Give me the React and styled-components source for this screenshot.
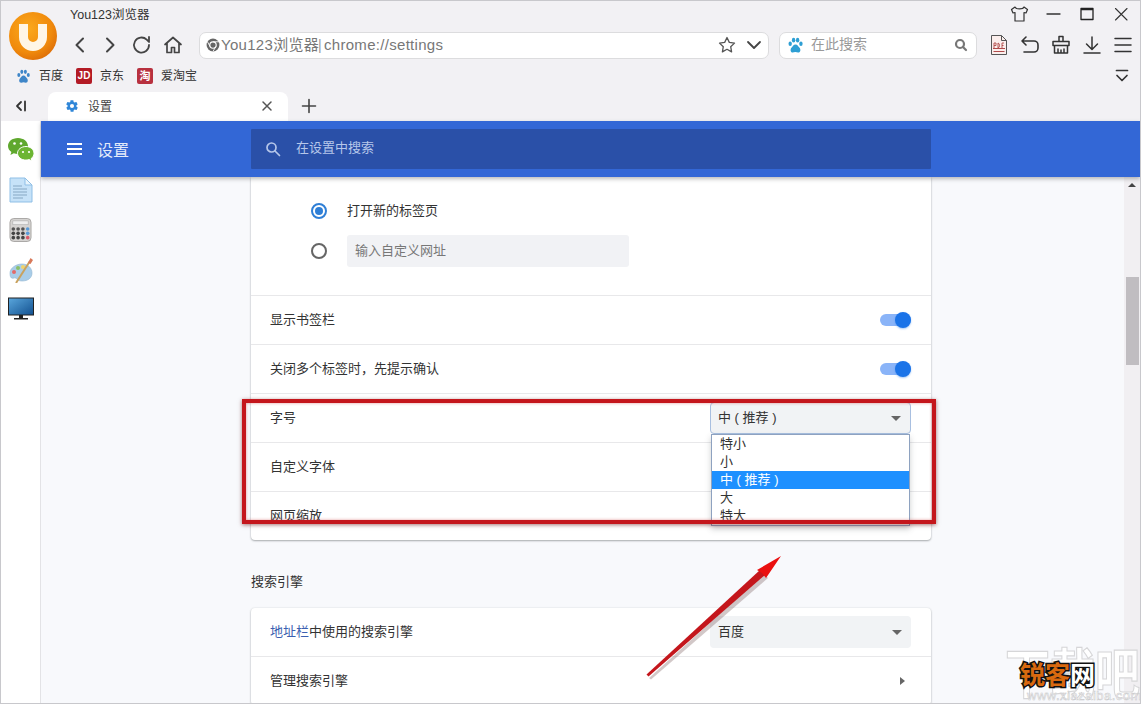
import React from "react";
import styled, { createGlobalStyle } from "styled-components";

const Global = createGlobalStyle`
  html, body { margin: 0; padding: 0; background: #f2f1f4; }
  * { box-sizing: border-box; }
  body { font-family: "Liberation Sans", "Noto Sans CJK SC", sans-serif; color: #333; }
`;

const Page = styled.div`
  position: relative;
  width: 1141px;
  height: 704px;
  overflow: hidden;
  background: #f2f1f4;
  border: 1px solid #c8c8cc;
  display: flex;
  flex-direction: column;
`;
const Label = styled.span`
  display: block;
  padding-bottom: 4px;
  white-space: nowrap;
`;

const Chrome = styled.header`
  flex: none;
  height: 120px;
  display: flex;
  flex-direction: column;
`;
const TopArea = styled.div`
  display: flex;
  height: 60px;
`;
const LogoCol = styled.div`
  width: 69px;
  flex: none;
  padding: 11px 0 0 8px;
`;
const TopRight = styled.div`
  flex: 1;
  display: flex;
  flex-direction: column;
  min-width: 0;
`;
const TitleRow = styled.div`
  height: 29px;
  display: flex;
  align-items: center;
  justify-content: space-between;
  font-size: 12.5px;
  color: #333;
`;
const WinButtons = styled.div`
  display: flex;
  align-items: center;
  gap: 14px;
  height: 24px;
  margin-top: -4px;
  padding-right: 9px;
`;
const NavRow = styled.div`
  display: flex;
  align-items: center;
  height: 30px;
`;
const NavIcons = styled.div`
  width: 129px;
  flex: none;
  display: flex;
  align-items: center;
  gap: 9px;
  margin-left: -1px;
  padding-right: 1px;
`;
const Field = styled.div`
  height: 27px;
  background: #fff;
  border: 1px solid #dcdcde;
  border-radius: 7px;
  display: flex;
  align-items: center;
  flex: none;
`;
const Address = styled(Field)`
  width: 570px;
  margin-left: 1px;
  padding: 0 3px 0 6px;
  gap: 5px;
  font-size: 15px;
  letter-spacing: 0.3px;
  color: #777;
`;
const AddressText = styled(Label)`
  flex: 1;
  margin-left: -4px;
`;
const Sep = styled.span`
  color: #999;
  font-size: 14px;
  margin: 0 2px 0 -1px;
`;
const WebSearch = styled(Field)`
  width: 198px;
  margin-left: 10px;
  padding: 0 7px 0 7px;
  font-size: 14px;
  color: #999;
  gap: 7px;
`;
const SearchHint = styled(Label)`
  flex: 1;
`;
const Tools = styled.div`
  display: flex;
  align-items: center;
  gap: 9px;
  margin-left: 11px;
`;
const BookmarkRow = styled.div`
  height: 30px;
  display: flex;
  align-items: center;
  padding-left: 15px;
  font-size: 12px;
  color: #333;
  justify-content: space-between;
  padding-right: 10px;
`;
const Bookmarks = styled.div`
  display: flex;
  align-items: center;
`;
const Bookmark = styled.div`
  display: flex;
  align-items: center;
  gap: 8px;
  margin-right: 13px;
`;
const Badge = styled.span`
  width: 16px;
  height: 16px;
  border-radius: 2px;
  background: ${(p) => p.$bg};
  color: #fff;
  font-size: ${(p) => p.$size || 10}px;
  font-weight: 700;
  display: flex;
  align-items: center;
  justify-content: center;
  line-height: 1;
`;
const TabRow = styled.div`
  flex: 1;
  display: flex;
  align-items: flex-end;
`;
const TabToggle = styled.div`
  width: 47px;
  height: 29px;
  flex: none;
  display: flex;
  align-items: center;
  padding: 0 0 2px 13px;
`;
const Tab = styled.div`
  width: 240px;
  height: 29px;
  background: #fff;
  border-radius: 8px 8px 0 0;
  display: flex;
  align-items: center;
  padding: 0 14px 2px 17px;
  font-size: 12px;
  color: #444;
  gap: 9px;
`;
const TabTitle = styled.span`
  flex: 1;
`;
const NewTab = styled.div`
  width: 42px;
  height: 29px;
  padding-bottom: 2px;
  display: flex;
  align-items: center;
  justify-content: center;
`;

const Body = styled.div`
  flex: 1;
  display: flex;
  min-height: 0;
`;
const Rail = styled.aside`
  width: 40px;
  flex: none;
  background: #fff;
  border-right: 1px solid #e3e3e6;
  display: flex;
  flex-direction: column;
  align-items: center;
  padding-top: 16px;
  gap: 14px;
`;
const Settings = styled.div`
  flex: 1;
  min-width: 0;
  display: flex;
  flex-direction: column;
  background: #f8f9fc;
`;
const AppBar = styled.div`
  height: 56px;
  flex: none;
  background: #3367d6;
  display: flex;
  align-items: center;
  color: #fff;
  position: relative;
  z-index: 2;
  box-shadow: 0 2px 4px rgba(60, 64, 67, 0.35);
`;
const AppTitle = styled.div`
  width: 210px;
  flex: none;
  display: flex;
  align-items: center;
  padding-left: 25px;
  gap: 14px;
  font-size: 16px;
  color: #e4ebfa;
`;
const AppSearch = styled.div`
  width: 680px;
  height: 40px;
  background: #2a50a8;
  border-radius: 1px;
  display: flex;
  align-items: center;
  padding: 0 0 1px 14px;
  gap: 15px;
  font-size: 13px;
  color: #b6c7ea;
`;
const Content = styled.div`
  flex: 1;
  display: flex;
  min-height: 0;
`;
const Scroller = styled.main`
  flex: 1;
  min-width: 0;
  overflow: hidden;
  padding-left: 210px;
`;
const Card = styled.section`
  width: 680px;
  background: #fff;
  border-radius: ${(p) => (p.$open ? "0 0 4px 4px" : "4px")};
  box-shadow: 0 1px 2px rgba(60, 64, 67, 0.4), 0 0 2px rgba(60, 64, 67, 0.12);
`;
const RadioBlock = styled.div`
  height: 118px;
  padding: 18px 0 0 60px;
  display: flex;
  flex-direction: column;
  gap: 8px;
`;
const RadioRow = styled.div`
  display: flex;
  align-items: center;
  gap: 20px;
  min-height: 32px;
  font-size: 13px;
  color: #333;
`;
const Radio = styled.span`
  width: 16px;
  height: 16px;
  flex: none;
  border-radius: 50%;
  border: 2px solid ${(p) => (p.$on ? "#2f7fd6" : "#666")};
  position: relative;
  &::after {
    content: "";
    display: ${(p) => (p.$on ? "block" : "none")};
    position: absolute;
    inset: 2px;
    border-radius: 50%;
    background: #2f7fd6;
  }
`;
const UrlInput = styled.div`
  width: 282px;
  height: 32px;
  background: #f1f2f5;
  border-radius: 3px;
  display: flex;
  align-items: center;
  padding-left: 8px;
  font-size: 13px;
  color: #777;
`;
const Row = styled.div`
  height: 49px;
  border-top: 1px solid #e8e8ea;
  display: flex;
  align-items: center;
  justify-content: space-between;
  padding: 0 20px 0 19px;
  font-size: 13px;
  color: #333;
  &:first-child {
    border-top: 0;
    height: 48px;
  }
`;
const Toggle = styled.span`
  position: relative;
  width: 31px;
  height: 12px;
  border-radius: 6px;
  background: #8ab4f8;
  &::after {
    content: "";
    position: absolute;
    right: 0;
    top: -2px;
    width: 16px;
    height: 16px;
    border-radius: 50%;
    background: #1a73e8;
    box-shadow: 0 1px 2px rgba(26, 115, 232, 0.4);
  }
`;
const SelectWrap = styled.div`
  position: relative;
  width: 201px;
`;
const Select = styled.div`
  height: 32px;
  background: #f1f3f5;
  border-radius: 4px;
  border: ${(p) => (p.$focus ? "1px solid #a8bfe0" : "0")};
  display: flex;
  align-items: center;
  justify-content: space-between;
  padding: 0 9px 0 ${(p) => (p.$focus ? 7 : 8)}px;
  font-size: 13px;
  color: #333;
`;
const Caret = styled.span`
  width: 0;
  height: 0;
  border-left: 5px solid transparent;
  border-right: 5px solid transparent;
  border-top: 5px solid #666;
`;
const Menu = styled.ul`
  position: absolute;
  z-index: 3;
  left: 1px;
  top: 32px;
  width: 199px;
  height: 92px;
  margin: 0;
  padding: 0;
  list-style: none;
  background: #fff;
  border: 1px solid #8ea2c0;
  box-shadow: 0 3px 6px rgba(60, 64, 67, 0.25);
  font-size: 13px;
  color: #333;
`;
const Option = styled.li`
  height: 18px;
  line-height: 18px;
  padding-left: 8px;
  background: ${(p) => (p.$on ? "#1e90ff" : "transparent")};
  color: ${(p) => (p.$on ? "#fff" : "#333")};
`;
const SectionTitle = styled.h2`
  margin: 0;
  height: 68px;
  padding-top: 34px;
  font-size: 13px;
  line-height: 16px;
  font-weight: 400;
  color: #333;
`;
const LinkWord = styled.span`
  color: #3b5fb0;
`;
const Chevron = styled.span`
  width: 0;
  height: 0;
  border-top: 4px solid transparent;
  border-bottom: 4px solid transparent;
  border-left: 5px solid #666;
  margin-right: 6px;
`;
const Scrollbar = styled.div`
  width: 16px;
  flex: none;
  background: #f1eff2;
  display: flex;
  flex-direction: column;
  align-items: center;
`;
const ScrollUp = styled.span`
  margin-top: 6px;
  width: 0;
  height: 0;
  border-left: 4px solid transparent;
  border-right: 4px solid transparent;
  border-bottom: 4px solid #444;
`;
const Thumb = styled.div`
  width: 13px;
  height: 88px;
  margin-top: 90px;
  background: #c0bdc1;
`;
const ScrollDown = styled.span`
  margin-top: auto;
  margin-bottom: 6px;
  width: 0;
  height: 0;
  border-left: 4px solid transparent;
  border-right: 4px solid transparent;
  border-top: 4px solid #444;
`;

const RedFrame = styled.div`
  position: absolute;
  left: 241px;
  top: 398px;
  width: 694px;
  height: 125px;
  border: 4px solid #c4161c;
  box-shadow: 0 1px 4px rgba(90, 0, 0, 0.55), inset 0 0 3px rgba(200, 40, 40, 0.5);
  z-index: 5;
  pointer-events: none;
`;
const ArrowLayer = styled.svg`
  position: absolute;
  left: 629px;
  top: 539px;
  z-index: 5;
`;
const Watermark = styled.div`
  position: absolute;
  left: 1003px;
  top: 640px;
  width: 136px;
  height: 62px;
  z-index: 6;
  font-family: "Noto Sans CJK SC", sans-serif;
`;
const WmBig = styled.div`
  position: absolute;
  left: 1px;
  top: 5px;
  font-size: 45px;
  line-height: 50px;
  font-weight: 700;
  white-space: nowrap;
  color: rgba(255, 255, 255, 0.92);
  -webkit-text-stroke: 1px #d6d6d8;
  transform: scaleY(1.2);
`;
const WmUrl = styled.div`
  position: absolute;
  left: 23px;
  bottom: 0;
  font-family: "Liberation Sans", sans-serif;
  font-size: 13px;
  line-height: 14px;
  letter-spacing: 0.5px;
  white-space: nowrap;
  color: #fff;
  -webkit-text-stroke: 0.5px #c6c6c8;
`;
const WmBrand = styled.div`
  position: absolute;
  left: 16px;
  top: 17px;
  font-size: 25px;
  line-height: 30px;
  font-weight: 700;
  white-space: nowrap;
  color: #d9690f;
  -webkit-text-stroke: 3px #111;
  paint-order: stroke fill;
`;
const WmBrandLast = styled.span`
  color: #fff;
`;

const Line = (p) => (
  <svg width={p.w || 22} height={p.h || 22} viewBox={`0 0 ${p.w || 22} ${p.h || 22}`} fill="none" stroke={p.c || "#444"} strokeWidth={p.s || 1.6} strokeLinecap="round" strokeLinejoin="round">
    {p.children}
  </svg>
);

const Logo = () => (
  <svg width="48" height="48" viewBox="0 0 48 48">
    <defs>
      <radialGradient id="lg" cx="0.4" cy="0.35" r="0.75">
        <stop offset="0" stopColor="#fba91d" />
        <stop offset="0.65" stopColor="#f08a0c" />
        <stop offset="1" stopColor="#d96707" />
      </radialGradient>
    </defs>
    <circle cx="24" cy="24" r="24" fill="url(#lg)" />
    <path d="M14.500 12v13a9.500 9.500 0 0 0 19 0V12" fill="none" stroke="#fff6e6" strokeWidth="9" />
  </svg>
);

const Paw = ({ size = 16, du }) => (
  <svg width={size} height={size} viewBox="0 0 16 16" fill={du ? "#2e9fd4" : "#3f86c8"}>
    <ellipse cx="3" cy="6.300" rx="1.600" ry="2.100" />
    <ellipse cx="6.200" cy="3" rx="1.600" ry="2.200" />
    <ellipse cx="10" cy="3" rx="1.600" ry="2.200" />
    <ellipse cx="13.100" cy="6.300" rx="1.600" ry="2.100" />
    <path d="M8 7c-2 0-2.300 1.700-3.600 2.800C3 11 2.800 14.600 5.600 14.600c1 0 1.500-.4 2.400-.4s1.500.4 2.400.4c2.800 0 2.600-3.600 1.200-4.800C10.300 8.700 10 7 8 7z" />
  </svg>
);

const Gear = () => (
  <svg width="14" height="14" viewBox="0 0 24 24" fill="#2f86d8">
    <path d="M19.400 13c.1-.3.1-.7.1-1s0-.7-.1-1l2.100-1.600c.2-.2.2-.4.1-.6l-2-3.500c-.1-.2-.4-.3-.6-.2l-2.500 1c-.5-.4-1.100-.7-1.700-1l-.4-2.600c0-.3-.2-.5-.5-.5h-4c-.3 0-.5.2-.5.4l-.4 2.700c-.6.2-1.100.6-1.700 1l-2.500-1c-.2-.1-.5 0-.6.2l-2 3.500c-.1.2-.1.5.1.6L4.600 11c0 .3-.1.700-.1 1s0 .7.1 1l-2.100 1.600c-.2.2-.2.4-.1.6l2 3.500c.1.2.4.3.6.2l2.500-1c.5.4 1.100.7 1.700 1l.4 2.600c0 .3.2.5.5.5h4c.3 0 .5-.2.5-.4l.4-2.700c.6-.2 1.100-.6 1.700-1l2.500 1c.2.1.5 0 .6-.2l2-3.500c.1-.2.1-.5-.1-.6zM12 15.500a3.500 3.500 0 1 1 0-7 3.500 3.500 0 0 1 0 7z" />
  </svg>
);

const ChromeMark = () => (
  <svg width="14" height="14" viewBox="0 0 24 24">
    <circle cx="12" cy="12" r="11" fill="#666" />
    <circle cx="12" cy="12" r="5.500" fill="#666" stroke="#fff" strokeWidth="2" />
    <path d="M12 6.500h10M7 14.700 2.500 6.500M16.800 14.700 12 23" stroke="#fff" strokeWidth="1.500" />
  </svg>
);

const Wechat = () => (
  <svg width="28" height="26" viewBox="0 0 28 26">
    <path d="M11 1C5 1 1 4.600 1 9c0 2.500 1.300 4.600 3.400 6l-1 3 3.400-1.700c1.300.4 2.700.7 4.200.7 5.500 0 10-3.600 10-8S16.500 1 11 1z" fill="#5fa82e" />
    <path d="M19 9.500c-4.700 0-8.500 3-8.500 6.800s3.800 6.800 8.500 6.800c1.100 0 2.200-.2 3.200-.5l2.800 1.400-.8-2.500c1.800-1.200 2.800-3 2.800-5.200 0-3.800-3.700-6.800-8-6.800z" fill="#6cb533" stroke="#fff" strokeWidth="1" />
    <circle cx="7.500" cy="6.500" r="1.300" fill="#fff" />
    <circle cx="14" cy="6.500" r="1.300" fill="#fff" />
    <circle cx="16" cy="15" r="1.100" fill="#fff" />
    <circle cx="22" cy="15" r="1.100" fill="#fff" />
  </svg>
);

const DocIcon = () => (
  <svg width="24" height="26" viewBox="0 0 24 26">
    <path d="M1 1h15l7 7v17H1z" fill="#c6e2f8" stroke="#8fbfe6" />
    <path d="M16 1v7h7z" fill="#e8f4fc" stroke="#8fbfe6" />
    <path d="M4 9h9M4 12h14M4 15h14M4 18h14M4 21h10" stroke="#86a7c4" strokeWidth="1.200" />
  </svg>
);

const CalcIcon = () => {
  const dots = [];
  const colors = [["#555", "#555", "#555", "#5a9bd8"], ["#444", "#444", "#444", "#5a9bd8"], ["#444", "#444", "#444", "#d85a6a"]];
  colors.forEach((r, y) => r.forEach((c, x) => dots.push(<circle key={`${x}-${y}`} cx={4.500 + x * 5} cy={12 + y * 4.500} r="1.900" fill={c} />)));
  return (
    <svg width="23" height="26" viewBox="0 0 24 26">
      <rect x="1" y="1" width="22" height="24" rx="4" fill="#d5d3d1" stroke="#a8a6a4" />
      <rect x="4" y="3.500" width="16" height="4" fill="#eee" stroke="#aaa" strokeWidth="0.600" />
      {dots}
    </svg>
  );
};

const PaletteIcon = () => (
  <svg width="26" height="26" viewBox="0 0 26 26">
    <path d="M2 16c0-5 6-9 12-9s10 4 10 9-4 8-10 8-5-4-8-3-4-1-4-5z" fill="#a9cde8" stroke="#8fb3d0" strokeWidth="0.600" />
    <circle cx="6" cy="15" r="2" fill="#e26a6a" />
    <circle cx="10" cy="11" r="2" fill="#8cc06a" />
    <circle cx="15" cy="10" r="2" fill="#f1d36b" />
    <path d="M8 26 L22 4" stroke="#c9a25e" strokeWidth="2" />
    <path d="M20 6 L22.500 1 L25 3 L22.500 7z" fill="#d8795a" />
  </svg>
);

const MonitorIcon = () => (
  <svg width="26" height="24" viewBox="0 0 26 24">
    <defs>
      <linearGradient id="mon" x1="0" y1="0" x2="1" y2="1">
        <stop offset="0" stopColor="#5aa7dd" />
        <stop offset="1" stopColor="#12508f" />
      </linearGradient>
    </defs>
    <rect x="0.500" y="1" width="25" height="17" fill="url(#mon)" stroke="#222" />
    <rect x="11" y="18" width="4" height="3" fill="#222" />
    <rect x="6" y="21" width="14" height="1.500" fill="#222" />
  </svg>
);

const PdfIcon = () => (
  <svg width="22" height="22" viewBox="0 0 22 22" fill="none">
    <path d="M3.500 1.500h10l5 5v14h-15z" fill="#fbeeec" stroke="#555" />
    <path d="M13.500 1.500v5h5" stroke="#555" />
    <path d="M5 14.500h12M5.500 17.500h11" stroke="#b04a4a" strokeWidth="1.100" />
    <path d="M6 9v5M6 9h2v2.500H6M10 9v5M10 9c2 0 2 5 0 5M14 9v5M14 9h2M14 11.500h1.500" stroke="#b04a4a" strokeWidth="0.900" />
  </svg>
);

export default function App() {
  return (
    <>
      <Global />
      <Page>
        <Chrome>
          <TopArea>
            <LogoCol><Logo /></LogoCol>
            <TopRight>
              <TitleRow>
                <Label>You123浏览器</Label>
                <WinButtons>
                  <Line w={20} h={20} s={1.200} c="#333"><path d="M6 3 2.500 5.500 4 9l2-.5V17h9V8.500l2 .5 1.500-3.500L15 3c-1 2.500-8 2.500-9 0z" /></Line>
                  <Line w={20} h={20} s={1.300} c="#333"><path d="M4 10h13" /></Line>
                  <Line w={20} h={20} s={1.300} c="#222"><path d="M4 4.500h12v11H4zM4 5.500h12" strokeLinecap="butt" /></Line>
                  <Line w={20} h={20} s={1.100} c="#333"><path d="M4.500 4.500 16 16M16 4.500 4.500 16" /></Line>
                </WinButtons>
              </TitleRow>
              <NavRow>
                <NavIcons>
                  <Line s={2}><path d="M14 4.500 7.500 11l6.500 6.500" /></Line>
                  <Line s={2}><path d="M7 4.500 13.500 11 7 17.500" /></Line>
                  <Line s={1.800}><path d="M18 11a7.500 7.500 0 1 1-2.300-5.400L18 8V3" /></Line>
                  <Line s={1.700}><path d="M3 10.500 11 3.500l8 7M5 9v9.500h4.500v-5h3v5H17V9" /></Line>
                </NavIcons>
                <Address>
                  <ChromeMark />
                  <AddressText>You123浏览器<Sep>|</Sep>chrome://settings</AddressText>
                  <Line s={1.300} c="#555"><path d="m11 3.500 2.300 4.900 5.200.7-3.800 3.600.9 5.200-4.600-2.600-4.600 2.600.9-5.200-3.800-3.600 5.200-.7z" /></Line>
                  <Line s={1.800} c="#444"><path d="m5 8 6 6 6-6" /></Line>
                </Address>
                <WebSearch>
                  <Paw size={17} du />
                  <SearchHint>在此搜索</SearchHint>
                  <Line w={16} h={16} s={2.200} c="#777"><circle cx="7" cy="7" r="4" /><path d="m10 10 3 3" /></Line>
                </WebSearch>
                <Tools>
                  <PdfIcon />
                  <Line s={1.600} c="#333"><path d="M7 3 3 7l4 4M3 7h12a4 4 0 0 1 4 4v3a4 4 0 0 1-4 4H5" /></Line>
                  <Line s={1.500} c="#333"><path d="M9 2.500h4v5H9zM3 7.500h16v4H3zM4.500 11.500V19h13v-7.500M8 19v-4M11 19v-3M14 19v-4" /></Line>
                  <Line s={1.500} c="#333"><path d="M11 3v12M5.500 10 11 15.500 16.500 10M3 19h16" /></Line>
                  <Line s={1.500} c="#333"><path d="M3 4.500h16M3 11h16M3 17.500h16" /></Line>
                </Tools>
              </NavRow>
            </TopRight>
          </TopArea>
          <BookmarkRow>
            <Bookmarks>
              <Bookmark><Paw size={15} /><Label>百度</Label></Bookmark>
              <Bookmark><Badge $bg="#b31b25">JD</Badge><Label>京东</Label></Bookmark>
              <Bookmark><Badge $bg="#b8313f" $size={11}>淘</Badge><Label>爱淘宝</Label></Bookmark>
            </Bookmarks>
            <Line w={16} h={16} s={1.700} c="#333"><path d="M2.500 2.500h11M3 7.500l5 5 5-5" /></Line>
          </BookmarkRow>
          <TabRow>
            <TabToggle>
              <Line w={14} h={14} s={1.800} c="#333"><path d="M7 3 3 7l4 4M11 2.500v9" /></Line>
            </TabToggle>
            <Tab>
              <Gear />
              <TabTitle>设置</TabTitle>
              <Line w={14} h={14} s={1.500} c="#555"><path d="m3 3 8 8M11 3l-8 8" /></Line>
            </Tab>
            <NewTab>
              <Line w={16} h={16} s={1.600} c="#444"><path d="M8 1.500v13M1.500 8h13" /></Line>
            </NewTab>
          </TabRow>
        </Chrome>
        <Body>
          <Rail>
            <Wechat />
            <DocIcon />
            <CalcIcon />
            <PaletteIcon />
            <MonitorIcon />
          </Rail>
          <Settings>
            <AppBar>
              <AppTitle>
                <Line w={17} h={14} s={2} c="#fff"><path d="M1 2h15M1 7h15M1 12h15" strokeLinecap="butt" /></Line>
                设置
              </AppTitle>
              <AppSearch>
                <Line w={16} h={16} s={1.700} c="#b6c7ea"><circle cx="6.500" cy="6.500" r="4.500" /><path d="m10 10 4.500 4.500" /></Line>
                <Label>在设置中搜索</Label>
              </AppSearch>
            </AppBar>
            <Content>
              <Scroller>
                <Card $open>
                  <RadioBlock>
                    <RadioRow><Radio $on /><Label>打开新的标签页</Label></RadioRow>
                    <RadioRow><Radio /><UrlInput><Label>输入自定义网址</Label></UrlInput></RadioRow>
                  </RadioBlock>
                  <Row><Label>显示书签栏</Label><Toggle /></Row>
                  <Row><Label>关闭多个标签时，先提示确认</Label><Toggle /></Row>
                  <Row>
                    <Label>字号</Label>
                    <SelectWrap>
                      <Select $focus><Label>中 ( 推荐 )</Label><Caret /></Select>
                      <Menu>
                        <Option>特小</Option>
                        <Option>小</Option>
                        <Option $on>中 ( 推荐 )</Option>
                        <Option>大</Option>
                        <Option>特大</Option>
                      </Menu>
                    </SelectWrap>
                  </Row>
                  <Row><Label>自定义字体</Label></Row>
                  <Row><Label>网页缩放</Label></Row>
                </Card>
                <SectionTitle>搜索引擎</SectionTitle>
                <Card>
                  <Row>
                    <Label><LinkWord>地址栏</LinkWord>中使用的搜索引擎</Label>
                    <SelectWrap><Select><Label>百度</Label><Caret /></Select></SelectWrap>
                  </Row>
                  <Row><Label>管理搜索引擎</Label><Chevron /></Row>
                </Card>
              </Scroller>
              <Scrollbar>
                <ScrollUp />
                <Thumb />
                <ScrollDown />
              </Scrollbar>
            </Content>
          </Settings>
        </Body>
        <RedFrame />
        <ArrowLayer width="170" height="150" viewBox="0 0 170 150">
          <path d="M19 138 L21 139.500 L138 38 L134 34z" fill="#6a4a4a" fillOpacity="0.3" />
          <path d="M16.500 134.500 L18.500 136.500 L135 35 L130 30z" fill="#c4161c" />
          <path d="M151 16 L127 30 L132 33 L136 38z" fill="#ea1010" />
        </ArrowLayer>
        <Watermark>
          <WmBig>下载吧</WmBig>
          <WmUrl>www.xiazaiba.com</WmUrl>
          <WmBrand>锐客<WmBrandLast>网</WmBrandLast></WmBrand>
        </Watermark>
      </Page>
    </>
  );
}
